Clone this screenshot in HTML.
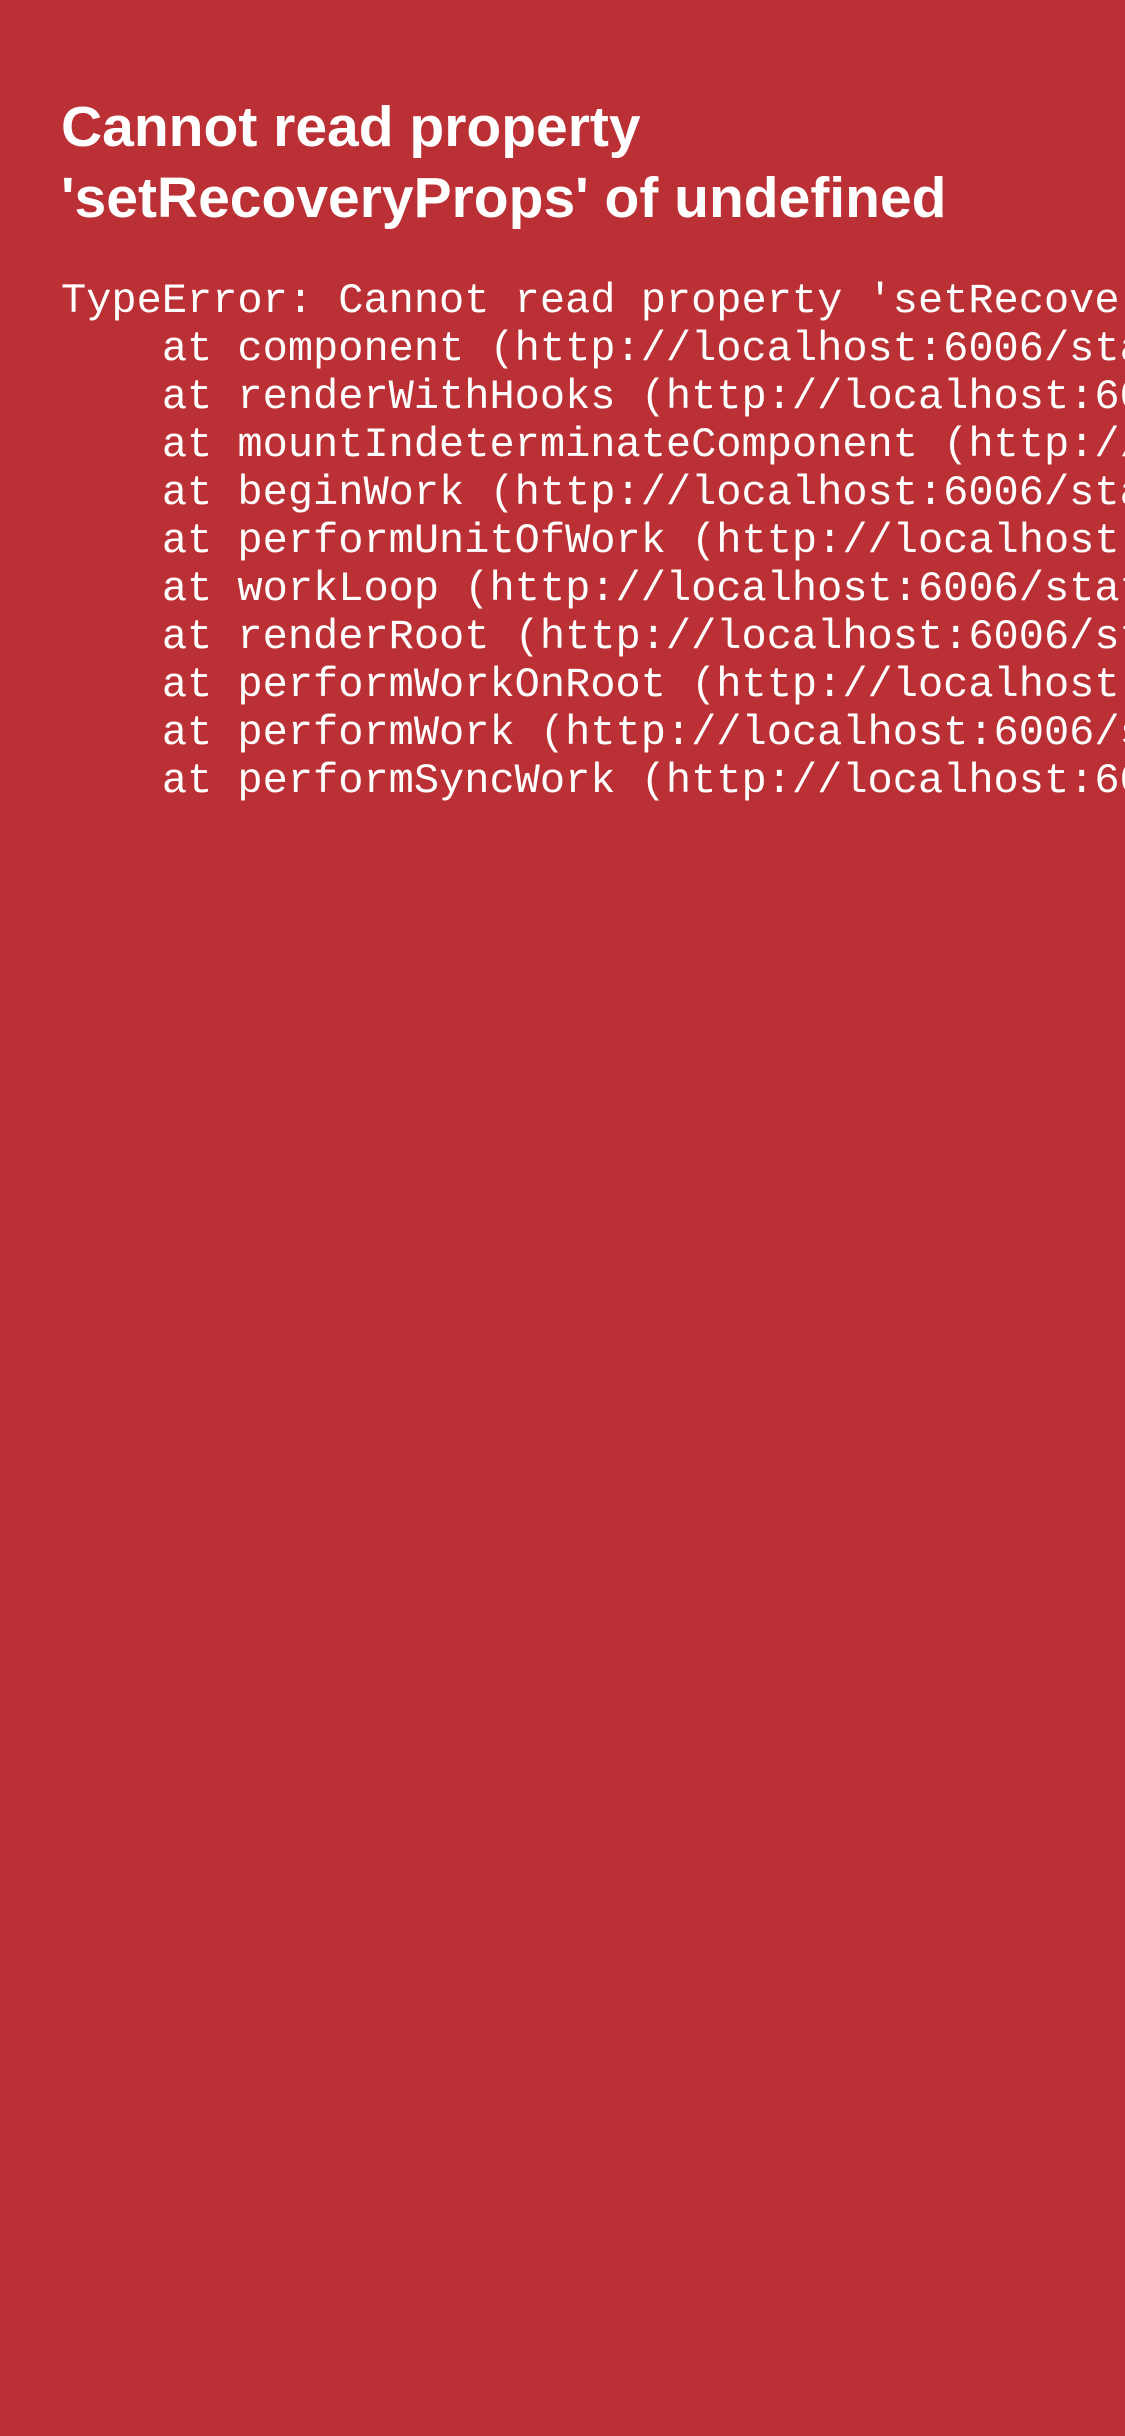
<!DOCTYPE html>
<html><head><meta charset="utf-8"><style>
html,body{margin:0;padding:0;overflow:hidden;}
body{width:1125px;height:2436px;background:#bb3034;overflow:hidden;position:relative;color:#fff;}
h1{position:absolute;left:61px;top:92px;margin:0;font-family:"Liberation Sans",sans-serif;font-weight:bold;font-size:57px;line-height:71px;white-space:nowrap;}
pre{position:absolute;left:61px;top:277px;width:1064px;overflow:hidden;margin:0;font-family:"Liberation Mono",monospace;font-size:42px;line-height:48px;white-space:pre;}
</style></head><body>
<h1>Cannot read property<br>'setRecoveryProps' of undefined</h1>
<pre>TypeError: Cannot read property 'setRecove
    at component (http://localhost:6006/sta
    at renderWithHooks (http://localhost:60
    at mountIndeterminateComponent (http://
    at beginWork (http://localhost:6006/sta
    at performUnitOfWork (http://localhost:
    at workLoop (http://localhost:6006/stat
    at renderRoot (http://localhost:6006/st
    at performWorkOnRoot (http://localhost:
    at performWork (http://localhost:6006/s
    at performSyncWork (http://localhost:60</pre>
</body></html>
